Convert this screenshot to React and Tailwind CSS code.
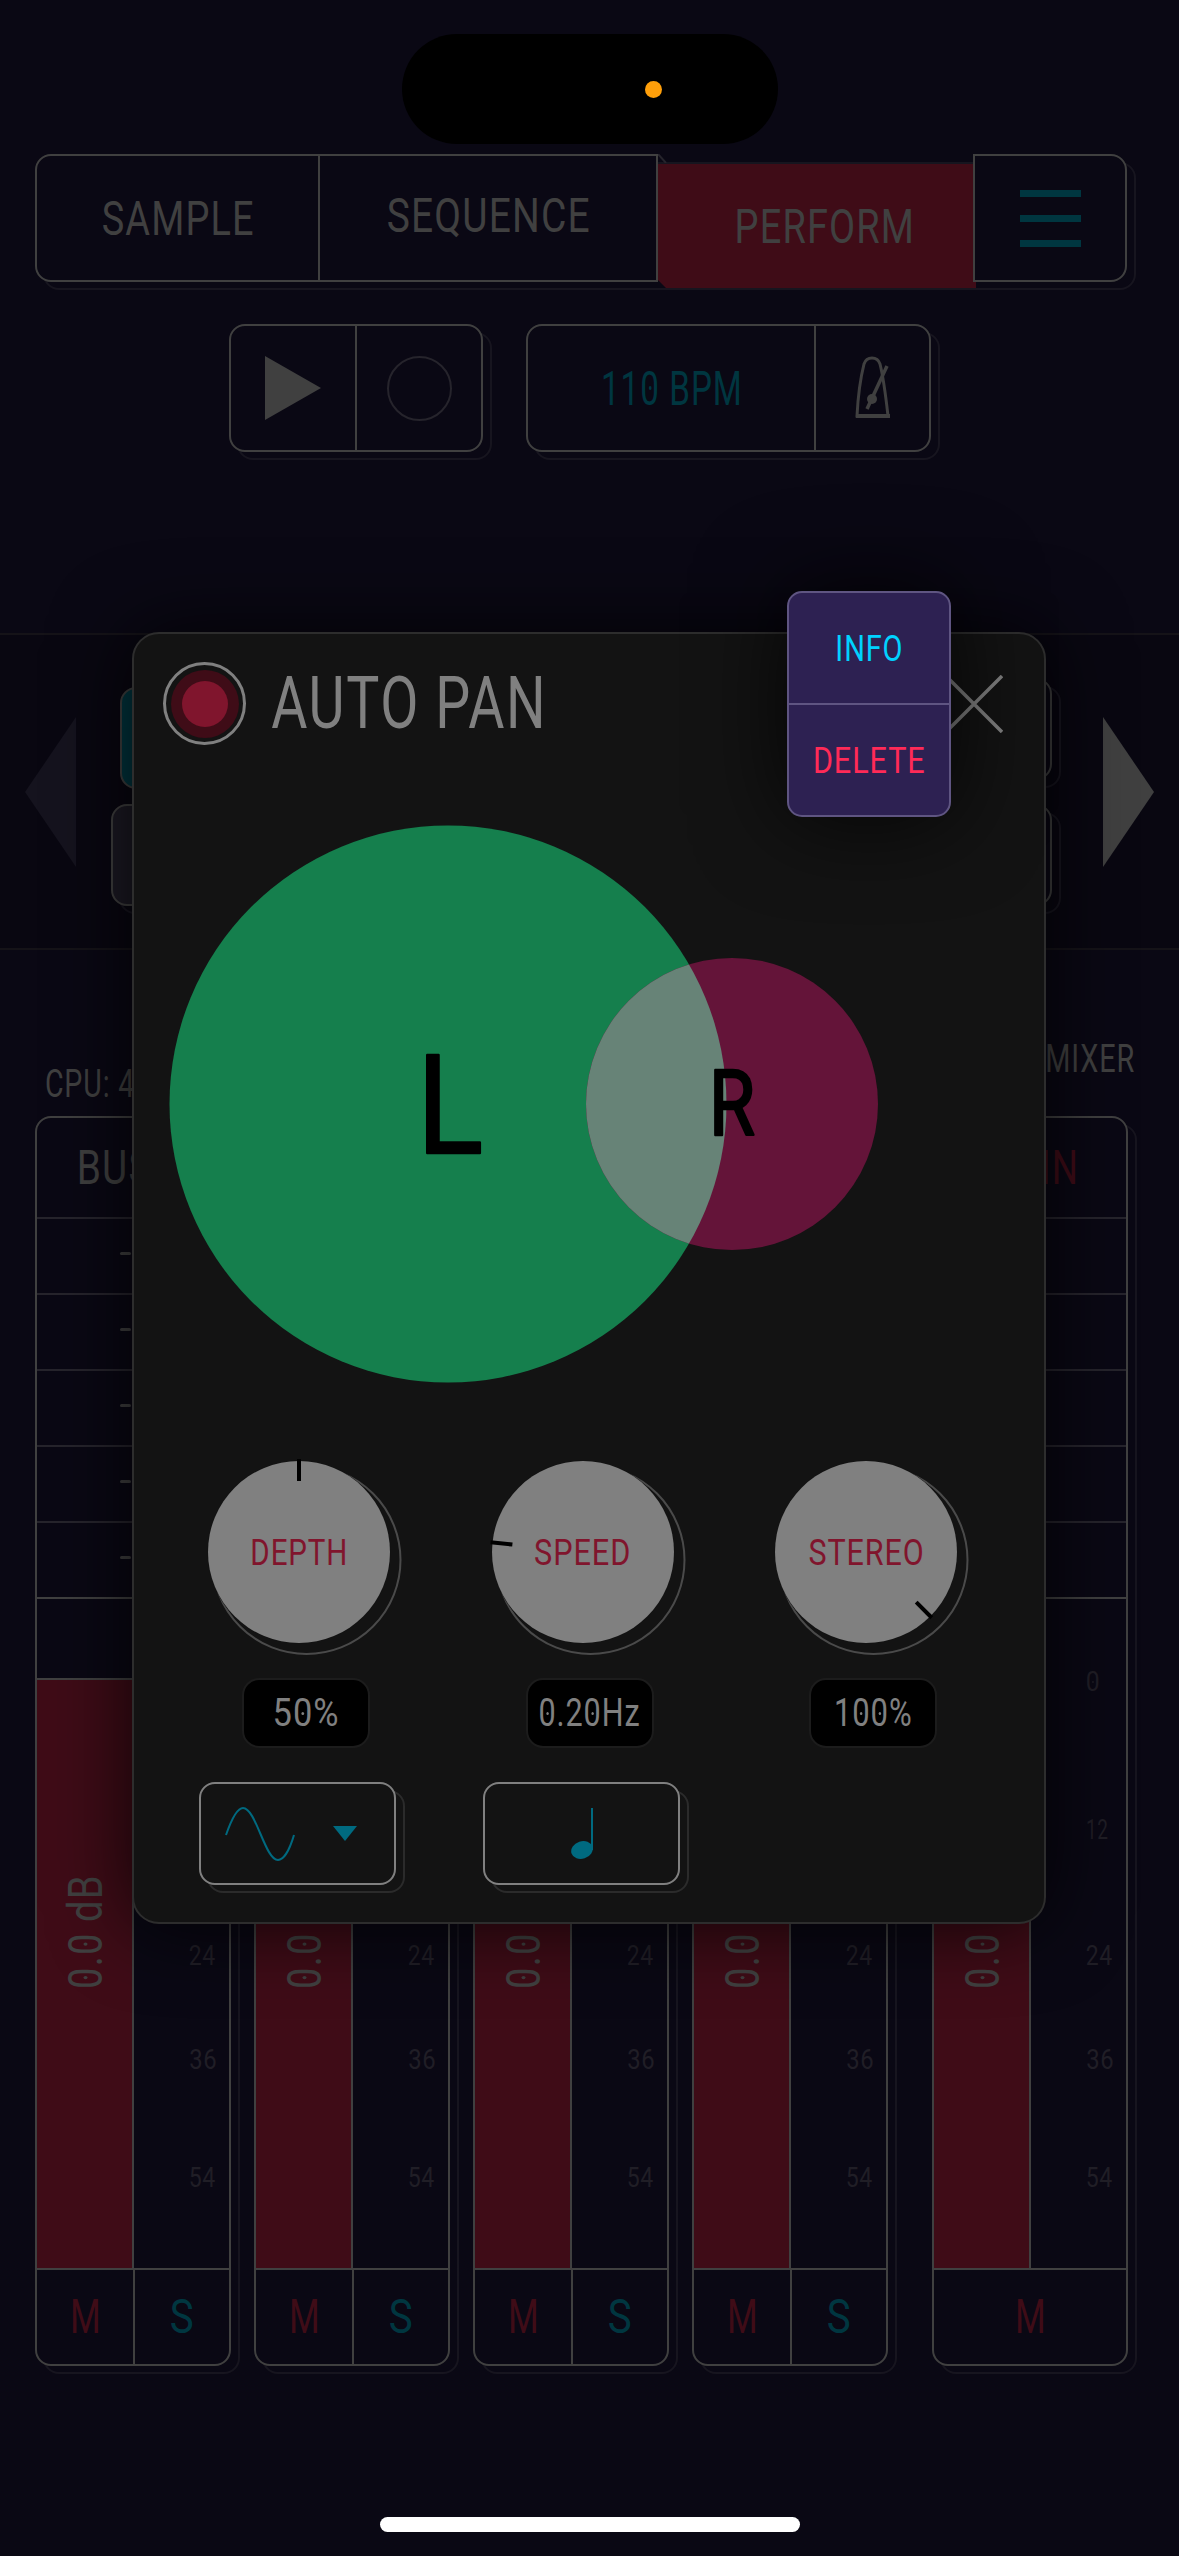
import { useLayoutEffect, useRef, useState } from "react";

/* Text condensed horizontally so that it takes up the given width. */
function Fit({ w, className = "", children }) {
  const ref = useRef(null);
  const [scale, setScale] = useState(1);
  useLayoutEffect(() => {
    setScale(w / ref.current.offsetWidth);
  }, [w]);
  return (
    <span className={`flex shrink-0 justify-center ${className}`} style={{ width: w }}>
      <span
        ref={ref}
        className="shrink-0 pl-[0.03em] leading-none tracking-[0.03em] whitespace-pre"
        style={{ transform: `scaleX(${scale})` }}
      >
        {children.split("").map((c, i) =>
          c === "0" ? (
            <span
              key={i}
              className="relative after:absolute after:top-[47%] after:left-[42%] after:h-[0.08em] after:w-[0.09em] after:rounded-full after:bg-current after:content-['']"
            >
              0
            </span>
          ) : (
            c
          )
        )}
      </span>
    </span>
  );
}

function Offset({ className = "border-[#17151f]" }) {
  return <div className={`absolute -right-[9px] -bottom-[8px] top-[8px] left-[8px] -z-10 rounded-[16px] border-2 ${className}`} />;
}

function Nav() {
  return (
    <div className="relative isolate mt-[10px] ml-[35px] flex h-[128px] w-[1092px] text-[49px] text-[#404040]">
      <Offset />
      <div className="flex w-[623px] shrink-0 rounded-l-[16px] border-2 border-[#404040] bg-[#0a0814]">
        <div className="flex w-[283px] items-center justify-center border-r-2 border-[#404040]">
          <Fit w={154}>SAMPLE</Fit>
        </div>
        <div className="flex flex-1 items-center justify-center pb-[6px]">
          <Fit w={205}>SEQUENCE</Fit>
        </div>
      </div>
      <div className="relative mt-[8px] -mr-[3px] h-[126px] flex-1">
        <div className="flex h-full items-center justify-center border-t-2 border-[#17151f] bg-[#3f0c17] pl-[15px] [clip-path:polygon(0_0,100%_0,100%_100%,8px_100%,0_118px)]">
          <Fit w={182}>PERFORM</Fit>
        </div>
        <svg width="9" height="9" className="absolute -top-[8px] left-0" stroke="#26242c" strokeWidth="2">
          <path d="M0 0L8 9" />
        </svg>
      </div>
      <div className="relative flex w-[154px] flex-col items-center justify-center gap-[18px] rounded-r-[16px] border-2 border-[#404040] bg-[#0a0814]">
        <div className="h-[7px] w-[61px] bg-[#003640]" />
        <div className="h-[7px] w-[61px] bg-[#003640]" />
        <div className="h-[7px] w-[61px] bg-[#003640]" />
      </div>
    </div>
  );
}

function Transport() {
  return (
    <div className="mt-[42px] ml-[229px] flex h-[128px] gap-[43px]">
      <div className="relative isolate w-[254px]">
        <Offset />
        <div className="flex h-full rounded-[16px] border-2 border-[#404040] bg-[#0a0814]">
          <div className="flex w-[126px] items-center justify-center border-r-2 border-[#404040]">
            <svg width="56" height="64" className="fill-[#404040]">
              <path d="M0 0L56 32L0 64Z" />
            </svg>
          </div>
          <div className="flex flex-1 items-center justify-center">
            <div className="size-[65px] rounded-full border-2 border-[#26242c]" />
          </div>
        </div>
      </div>
      <div className="relative isolate w-[405px]">
        <Offset />
        <div className="flex h-full rounded-[16px] border-2 border-[#404040] bg-[#0a0814]">
          <div className="flex w-[288px] items-center justify-center border-r-2 border-[#404040] text-[49px] text-[#003640]">
            <Fit w={143}>110 BPM</Fit>
          </div>
          <div className="flex flex-1 items-center justify-center">
            <svg width="36" height="64" viewBox="0 0 36 64" className="fill-none stroke-[#404040]" strokeWidth="3">
              <path d="M2 60C3 40 6 20 9 8Q11 2 17 2Q23 2 25 8C29 24 31 42 33 60Z" />
              <path d="M12 53L32 10" strokeWidth="3.5" />
              <path d="M1 60H35" strokeWidth="4" />
              <circle cx="17" cy="43" r="5" className="fill-[#404040]" stroke="none" />
            </svg>
          </div>
        </div>
      </div>
    </div>
  );
}

function Slot({ className = "" }) {
  return (
    <div className="relative isolate flex-1">
      <Offset />
      <div className={`h-full rounded-[16px] border-2 border-[#404040] ${className}`} />
    </div>
  );
}

function EffectBand() {
  return (
    <div className="mt-[181px] flex h-[317px] items-center justify-between border-y-2 border-[#151318] bg-[#090711] pr-[25px] pl-[25px]">
      <svg width="51" height="150" className="fill-[#15131e]">
        <path d="M51 0L0 75L51 150Z" />
      </svg>
      <div className="mr-[51px] ml-[35px] flex h-[228px] flex-1 flex-col gap-[24px]">
        <div className="flex flex-1 gap-[25px]">
          <div className="relative top-[9px] left-[9px] flex-1 rounded-[16px] border-2 border-[#404040] bg-[#003640]" />
          <Slot className="bg-[#0a0814]" />
        </div>
        <div className="flex flex-1 gap-[25px]">
          <Slot className="bg-[#1c1a24]" />
          <Slot className="bg-[#0a0814]" />
        </div>
      </div>
      <svg width="51" height="150" className="fill-[#404040]">
        <path d="M0 0L51 75L0 150Z" />
      </svg>
    </div>
  );
}

function Channel({ name, nameWidth, nameClass, main }) {
  return (
    <div className="relative isolate h-[1250px] w-[196px]">
      <Offset />
      <div className="flex h-full flex-col overflow-hidden rounded-[16px] border-2 border-[#404040] bg-[#0a0814]">
        <div className={`flex h-[101px] shrink-0 items-center justify-center border-b-2 border-[#26242c] text-[48px] ${nameClass}`}>
          {name && <Fit w={nameWidth}>{name}</Fit>}
        </div>
        {[0, 1, 2, 3, 4].map((i) => (
          <div
            key={i}
            className={`flex h-[76px] shrink-0 items-center justify-center border-b-2 ${i === 4 ? "border-[#404040]" : "border-[#26242c]"}`}
          >
            <div className="mb-[5px] flex gap-[4px]">
              <div className="h-[3px] w-[11px] rounded-full bg-[#404040]" />
              <div className="h-[3px] w-[11px] rounded-full bg-[#404040]" />
            </div>
          </div>
        ))}
        <div className="flex h-[669px] shrink-0">
          <div className="w-[97px] border-r-2 border-[#404040] pt-[79px]">
            <div className="flex h-full flex-col items-center border-t-2 border-[#404040] bg-[#3f0c17] text-[49px] text-[#404040]">
              <div className="mt-[228px] -rotate-90">
                <Fit w={116}>0.0 dB</Fit>
              </div>
            </div>
          </div>
          <div className="flex flex-1 flex-col items-start justify-end pb-[76px] pl-[54px] text-[28px] leading-none text-[#201e26]">
            {main && (
              <>
                <Fit w={15}>0</Fit>
                <Fit w={23} className="mt-[120px] mb-[98px]">12</Fit>
              </>
            )}
            <Fit w={28}>24</Fit>
            <Fit w={29} className="mt-[76px]">36</Fit>
            <Fit w={28} className="mt-[90px]">54</Fit>
          </div>
        </div>
        <div className="flex flex-1 border-t-2 border-[#404040] text-[48px] text-[#3f0c17]">
          <div className="flex w-[97px] grow items-center justify-center">
            <Fit w={33}>M</Fit>
          </div>
          {!main && (
            <div className="flex w-[97px] items-center justify-center border-l-2 border-[#404040] text-[#003640]">
              <Fit w={26}>S</Fit>
            </div>
          )}
        </div>
      </div>
    </div>
  );
}

function Mixer() {
  return (
    <div>
      <div className="flex h-[166px] justify-between pr-[44px] pl-[44px] text-[38px] text-[#404040]">
        <Fit w={91} className="mt-[115px] self-start">CPU: 4</Fit>
        <Fit w={91} className="mt-[90px] self-start">MIXER</Fit>
      </div>
      <div className="flex gap-[23px] pl-[35px]">
        <Channel name="BUS A" nameWidth={114} nameClass="text-[#404040]" />
        <Channel />
        <Channel />
        <Channel />
        <div className="ml-[21px]">
          <Channel name="MAIN" nameWidth={98} nameClass="text-[#3f0c17]" main />
        </div>
      </div>
    </div>
  );
}

function Knob({ label, labelWidth, angle, value, valueWidth, children }) {
  return (
    <div className="flex w-[283.5px] shrink-0 flex-col">
      <div className="relative h-[204px] w-[210px]">
        <svg width="210" height="204" className="absolute inset-0">
          <circle cx="107.5" cy="106" r="94" fill="none" stroke="#4a4a4a" strokeWidth="2" />
          <circle cx="100" cy="98" r="91.5" fill="#131313" />
          <circle cx="100" cy="98" r="91" fill="#808080" />
          <path d="M100 5V27" stroke="#000" strokeWidth="4" transform={`rotate(${angle} 100 98)`} />
        </svg>
        <div className="absolute top-0 left-0 flex h-[196px] w-[200px] items-center justify-center text-[37px] text-[#80152d]">
          <Fit w={labelWidth}>{label}</Fit>
        </div>
      </div>
      <div className="mt-[20px] ml-[43px] flex h-[70px] w-[128px] items-center justify-center rounded-[17px] border-2 border-[#1c1c1c] bg-black text-[38px] text-[#808080]">
        <Fit w={valueWidth}>{value}</Fit>
      </div>
      {children && (
        <div className="relative isolate mt-[34px] h-[103px] w-[197px]">
          <Offset className="border-[#2b2b2b]" />
          <div className="flex h-full items-center rounded-[16px] border-2 border-[#808080] bg-[#131313]">{children}</div>
        </div>
      )}
    </div>
  );
}

function Modal() {
  return (
    <div className="absolute top-[632px] left-[132px] h-[1292px] w-[914px] rounded-[27px] border-2 border-[#2d2d2d] bg-[#131313] pt-[28px] shadow-[0_0_80px_rgba(0,0,0,0.8)]">
      <div className="flex items-center pr-[41px] pl-[29px]">
        <div className="flex size-[83px] items-center justify-center rounded-full border-3 border-[#808080]">
          <div className="flex size-[68px] items-center justify-center rounded-full bg-[#3f0c17]">
            <div className="size-[46px] rounded-full bg-[#80152d]" />
          </div>
        </div>
        <div className="ml-[23px] flex-1 text-[72px] text-[#808080]">
          <Fit w={278}>AUTO PAN</Fit>
        </div>
        <svg width="58" height="58" viewBox="0 0 58 58" stroke="#808080" strokeWidth="3.5">
          <path d="M1 1L57 57M57 1L1 57" />
        </svg>
      </div>
      <svg width="710" height="558" viewBox="0 0 710 558" className="mt-[80px] ml-[35px]">
        <clipPath id="left-field">
          <circle cx="279" cy="279" r="278.5" />
        </clipPath>
        <circle cx="279" cy="279" r="278.5" fill="#157f4d" />
        <circle cx="563" cy="279" r="146" fill="#641439" />
        <circle cx="563" cy="279" r="146" fill="#678377" clipPath="url(#left-field)" />
        <g stroke="#000" strokeWidth="2.5" strokeLinejoin="round">
          <text x="248" y="328" fontSize="137" textLength="66" lengthAdjust="spacingAndGlyphs">L</text>
          <text x="540" y="310" fontSize="90" textLength="46" lengthAdjust="spacingAndGlyphs">R</text>
        </g>
      </svg>
      <div className="mt-[71px] flex pl-[65px]">
        <Knob label="DEPTH" labelWidth={99} angle={0} value="50%" valueWidth={68}>
          <svg width="70" height="54" viewBox="0 0 70 54" className="ml-[24px] fill-none stroke-[#006a80]" strokeWidth="2">
            <path d="M1 28C8 8 14 1 18 1C31 1 40 53 53 53C58 53 64 45 69 28" />
          </svg>
          <svg width="24" height="15" className="ml-[38px] fill-[#006a80]">
            <path d="M0 0H24L12 15Z" />
          </svg>
        </Knob>
        <Knob label="SPEED" labelWidth={98} angle={-84} value="0.20Hz" valueWidth={103}>
          <svg width="24" height="52" viewBox="0 0 24 52" className="ml-[86px] fill-[#006a80]">
            <ellipse cx="11" cy="42" rx="11" ry="8.7" transform="rotate(-18 11 42)" />
            <path d="M20 0H22V42H20Z" />
          </svg>
        </Knob>
        <Knob label="STEREO" labelWidth={117} angle={135} value="100%" valueWidth={80} />
      </div>
    </div>
  );
}

function Popover() {
  return (
    <div className="absolute top-[591px] left-[787px] flex h-[226px] w-[164px] flex-col rounded-[15px] border-2 border-[#5f5582] bg-[#2d2152] text-[37px] shadow-[0_0_90px_rgba(0,0,0,0.8)]">
      <div className="flex flex-1 items-center justify-center border-b-2 border-[#5f5582] text-[#00d2ff]">
        <Fit w={69}>INFO</Fit>
      </div>
      <div className="flex flex-1 items-center justify-center text-[#ff2a57]">
        <Fit w={114}>DELETE</Fit>
      </div>
    </div>
  );
}

export default function App() {
  return (
    <div className="relative h-[2556px] w-[1179px] overflow-hidden bg-[#0a0814] pt-[34px] font-['Roboto',sans-serif]">
      <div className="mx-auto flex h-[110px] w-[376px] items-center rounded-full bg-black pl-[243px]">
        <div className="size-[17px] rounded-full bg-[#ff9f0a]" />
      </div>
      <Nav />
      <Transport />
      <EffectBand />
      <Mixer />
      <div className="mx-auto mt-[151px] h-[15px] w-[420px] rounded-full bg-white" />
      <Modal />
      <Popover />
    </div>
  );
}
